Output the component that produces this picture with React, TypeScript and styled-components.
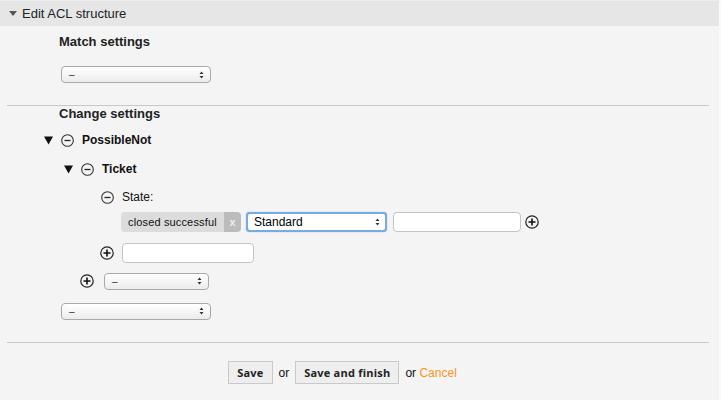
import React from 'react';
import styled, { createGlobalStyle } from 'styled-components';

const Global = createGlobalStyle`
  html, body { margin: 0; padding: 0; background: #f4f4f4; }
  body { font-family: "Liberation Sans", Arial, sans-serif; color: #000; }
  * { box-sizing: border-box; }
`;

const Widget = styled.div`
  width: 721px;
  height: 400px;
  background: #f4f4f4;
  border-top: 1px solid #eeeeee;
  border-right: 2px solid #fafafa;
`;

const Header = styled.div`
  height: 25px;
  background: #e6e6e6;
  display: flex;
  align-items: center;
  padding-left: 9px;
  gap: 5px;
  font-size: 13px;
  color: #222;
`;

const Content = styled.div`
  display: flex;
  flex-direction: column;
`;

const SectionTitle = styled.div<{ $top: number }>`
  margin-top: ${p => p.$top}px;
  padding-left: 59px;
  font-size: 13px;
  line-height: 16px;
  font-weight: bold;
  color: #222;
`;

const Separator = styled.hr<{ $top: number }>`
  margin: ${p => p.$top}px 10px 0 7px;
  border: 0;
  border-top: 1px solid #c8c8c8;
  height: 0;
`;

const Row = styled.div<{ $top: number; $indent: number; $h?: number; $gap?: number }>`
  display: flex;
  align-items: center;
  margin-top: ${p => p.$top}px;
  padding-left: ${p => p.$indent}px;
  height: ${p => p.$h ?? 20}px;
  gap: ${p => p.$gap ?? 8}px;
`;

const NodeLabel = styled.span<{ $bold?: boolean }>`
  font-size: 12px;
  font-weight: ${p => (p.$bold ? 'bold' : 'normal')};
  color: #111;
`;

const SelectBox = styled.div<{ $w: number }>`
  width: ${p => p.$w}px;
  height: 17px;
  border: 1px solid #a9a9a9;
  border-radius: 4px;
  background: linear-gradient(#ffffff, #ececec);
  display: flex;
  align-items: center;
  justify-content: space-between;
  padding: 0 6px 0 7px;
  font-size: 10px;
  color: #333;
`;

const FocusSelect = styled.div<{ $w: number }>`
  width: ${p => p.$w}px;
  height: 20px;
  border: 2px solid #7aaae4;
  border-radius: 4px;
  background: #fff;
  box-shadow: 0 0 1px #4a8ad4;
  display: flex;
  align-items: center;
  justify-content: space-between;
  padding: 0 5px 0 6px;
  font-size: 12px;
  color: #000;
`;

const TextInput = styled.div<{ $w: number }>`
  width: ${p => p.$w}px;
  height: 20px;
  border: 1px solid #c4c4c4;
  border-radius: 4px;
  background: #fff;
`;

const Tag = styled.div`
  display: flex;
  height: 20px;
  border-radius: 4px;
  overflow: hidden;
  font-size: 11px;
`;

const TagText = styled.span`
  background: #dcdcdc;
  color: #111;
  padding: 0 0 0 7px;
  display: flex;
  align-items: center;
  width: 103px;
  letter-spacing: 0.15px;
`;

const TagRemove = styled.span`
  background: #bcbcbc;
  color: #eeeeee;
  width: 17px;
  display: flex;
  align-items: center;
  justify-content: center;
  font-size: 11px;
  font-weight: bold;
`;

const Actions = styled.div`
  margin-top: 18px;
  display: flex;
  align-items: center;
  justify-content: center;
  gap: 6px;
  padding-right: 34px;
  font-size: 12px;
  color: #111;
`;

const Button = styled.button`
  height: 23px;
  padding: 0 8px;
  border: 1px solid #c9c9c9;
  background: #eeeeee;
  font-family: "Open Sans", "DejaVu Sans", sans-serif;
  font-weight: bold;
  font-size: 11px;
  letter-spacing: 0.22px;
  color: #222;
  border-radius: 0;
`;

const CancelLink = styled.a`
  color: #f7941d;
  text-decoration: none;
  font-size: 12px;
`;

const Arrows = () => (
  <svg width="5" height="8" viewBox="0 0 5 8">
    <path d="M0.5 3 L2.5 0.5 L4.5 3 Z M0.5 5 L2.5 7.5 L4.5 5 Z" fill="#333" />
  </svg>
);

const HeaderCaret = () => (
  <svg width="8" height="5" viewBox="0 0 8 5">
    <path d="M0 0 L8 0 L4 5 Z" fill="#555" />
  </svg>
);

const TreeToggle = () => (
  <svg width="9" height="9" viewBox="0 0 9 9">
    <path d="M0 0.5 L9 0.5 L4.5 8.5 Z" fill="#111" />
  </svg>
);

const MinusIcon = () => (
  <svg width="13" height="13" viewBox="0 0 13 13">
    <circle cx="6.5" cy="6.5" r="5.8" fill="none" stroke="#333" strokeWidth="1.1" />
    <path d="M3.5 6.5 H9.5" stroke="#222" strokeWidth="1.3" />
  </svg>
);

const PlusIcon = () => (
  <svg width="14" height="14" viewBox="0 0 14 14">
    <circle cx="7" cy="7" r="6.2" fill="none" stroke="#222" strokeWidth="1.2" />
    <path d="M3.5 7 H10.5 M7 3.5 V10.5" stroke="#111" strokeWidth="1.6" />
  </svg>
);

const Dash = () => <span>–</span>;

export default function App() {
  return (
    <>
      <Global />
      <Widget>
        <Header>
          <HeaderCaret />
          <span>Edit ACL structure</span>
        </Header>
        <Content>
          <SectionTitle $top={8}>Match settings</SectionTitle>
          <Row $top={15} $indent={61} $h={19}>
            <SelectBox $w={150}><Dash /><Arrows /></SelectBox>
          </Row>
          <Separator $top={21} />
          <SectionTitle $top={0}>Change settings</SectionTitle>
          <Row $top={8} $indent={44} $gap={8}>
            <TreeToggle />
            <MinusIcon />
            <NodeLabel $bold>PossibleNot</NodeLabel>
          </Row>
          <Row $top={9} $indent={64} $gap={8}>
            <TreeToggle />
            <MinusIcon />
            <NodeLabel $bold>Ticket</NodeLabel>
          </Row>
          <Row $top={8} $indent={101} $gap={8}>
            <MinusIcon />
            <NodeLabel>State:</NodeLabel>
          </Row>
          <Row $top={5} $indent={121} $gap={5}>
            <Tag>
              <TagText>closed successful</TagText>
              <TagRemove>x</TagRemove>
            </Tag>
            <FocusSelect $w={141}><span>Standard</span><Arrows /></FocusSelect>
            <Row $top={0} $indent={1} $gap={4}>
              <TextInput $w={128} />
              <PlusIcon />
            </Row>
          </Row>
          <Row $top={10} $indent={100} $h={21} $gap={8}>
            <PlusIcon />
            <TextInput $w={132} />
          </Row>
          <Row $top={8} $indent={80} $gap={10}>
            <PlusIcon />
            <SelectBox $w={105}><Dash /><Arrows /></SelectBox>
          </Row>
          <Row $top={11} $indent={61} $h={18}>
            <SelectBox $w={150}><Dash /><Arrows /></SelectBox>
          </Row>
          <Separator $top={22} />
          <Actions>
            <Button>Save</Button>
            <span>or</span>
            <Button>Save and finish</Button>
            <span>or <CancelLink href="#">Cancel</CancelLink></span>
          </Actions>
        </Content>
      </Widget>
    </>
  );
}
